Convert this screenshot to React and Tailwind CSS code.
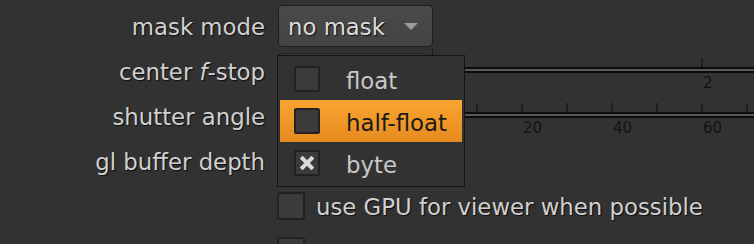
import { Fragment } from 'react'

const TEXT = 'pt-[4px] text-[#d0d0d0] [text-shadow:1px_1px_1px_#0d0d0d]'
const LABEL = `w-[265px] shrink-0 text-right ${TEXT}`

const MENU_ITEMS = [
  { id: 'float', label: 'float', checked: false, active: false },
  { id: 'half-float', label: 'half-float', checked: false, active: true },
  { id: 'byte', label: 'byte', checked: true, active: false },
]

// 4.5px per unit from the scale origin
const SHUTTER_TICKS = [10, 20, 30, 40, 50, 60, 70]
const SHUTTER_LABELS = [20, 40, 60]

function CheckMark() {
  return (
    <svg width="14" height="14" viewBox="0 0 14 14" aria-hidden="true">
      <path d="M2.5 2.5 L11.5 11.5 M11.5 2.5 L2.5 11.5" stroke="#d9d9d9" strokeWidth="4" strokeLinecap="square" />
    </svg>
  )
}

function Checkbox({ checked, size = 'h-[26px] w-[26px]' }) {
  return (
    <div className={`${size} flex shrink-0 items-center justify-center rounded-[2px] border-2 border-[#222] bg-[#3b3b3b]`}>
      {checked && <CheckMark />}
    </div>
  )
}

function Scale({ ticks, labels }) {
  return (
    <div className="relative ml-[5px] h-full flex-1 border-l border-[#1c1c1c]">
      <div className="absolute left-0 right-0 top-[19px] h-[6px] border-y-2 border-[#0c0c0c] bg-[#585858]" />
      {ticks.map((t) => (
        <div
          key={t.x}
          className="absolute top-[10px] h-[9px] w-[2px] bg-[#1f1f1f]"
          style={{ left: t.x - 2 }}
        />
      ))}
      {labels.map((l) => (
        <span
          key={l.x}
          className="absolute top-[28px] text-[15px] leading-[15px] text-[#121212]"
          style={{ left: l.x }}
        >
          {l.text}
        </span>
      ))}
    </div>
  )
}

function Row({ label, children }) {
  return (
    <div className="flex h-[45px] items-center">
      <div className={LABEL}>{label}</div>
      <div className="ml-[13px] flex h-full flex-1 items-center">{children}</div>
    </div>
  )
}

export default function App() {
  return (
    <div className="relative h-[244px] w-[754px] overflow-hidden bg-[#323232] pt-[3px] font-['DejaVu_Sans',sans-serif] text-[22.8px] leading-none">
      <Row label="mask mode">
        <div className="flex h-[42px] w-[155px] items-center justify-between rounded-[4px] border border-[#1e1e1e] bg-[linear-gradient(#4a4a4a,#434343)] pl-[9px] pr-[14px]">
          <span className="pt-[4px] text-[#dcdcdc] [text-shadow:1px_1px_1px_#0d0d0d]">no mask</span>
          <span className="mt-[1px] h-0 w-0 border-x-[7.5px] border-t-[7px] border-x-transparent border-t-[#9b9b9b]" />
        </div>
      </Row>

      <Row
        label={
          <Fragment>
            center <i>f</i>-stop
          </Fragment>
        }
      >
        <div className="h-[40px] w-[149px] shrink-0 self-end rounded-[4px] border border-[#1e1e1e] bg-[#3a3a3a]" />
        <Scale ticks={[{ x: 270 }]} labels={[{ x: 270, text: '2' }]} />
      </Row>

      <Row label="shutter angle">
        <div className="h-[40px] w-[149px] shrink-0 rounded-[4px] border border-[#1e1e1e] bg-[#3a3a3a]" />
        <Scale
          ticks={SHUTTER_TICKS.map((v) => ({ x: v * 4.5 }))}
          labels={SHUTTER_LABELS.map((v) => ({ x: v * 4.5, text: String(v) }))}
        />
      </Row>

      <Row label="gl buffer depth">
        <div className="h-[42px] w-[155px] rounded-[4px] border border-[#1e1e1e] bg-[#464646]" />
      </Row>

      <div className="flex h-[45px] items-center">
        <div className="w-[265px] shrink-0" />
        <div className="ml-[12px] flex items-center gap-[11px]">
          <Checkbox size="h-[28px] w-[28px]" />
          <span className={TEXT}>use GPU for viewer when possible</span>
        </div>
      </div>

      <div className="flex h-[45px] items-center">
        <div className="w-[265px] shrink-0" />
        <div className="ml-[12px]">
          <Checkbox size="h-[28px] w-[28px]" />
        </div>
      </div>

      {/* open menu for gl buffer depth */}
      <div className="absolute left-[277px] top-[55px] w-[188px] border border-[#141414] bg-[#323232] p-[2px]">
        {MENU_ITEMS.map((item) => (
          <div
            key={item.id}
            className={`flex h-[42px] items-center gap-[26px] pl-[14px] ${
              item.active ? 'bg-[linear-gradient(#f9a431,#e68b1f)] text-[#1a1a1a]' : 'text-[#c8c8c8]'
            }`}
          >
            <Checkbox checked={item.checked} />
            <span className="pt-[4px]">{item.label}</span>
          </div>
        ))}
      </div>
    </div>
  )
}
